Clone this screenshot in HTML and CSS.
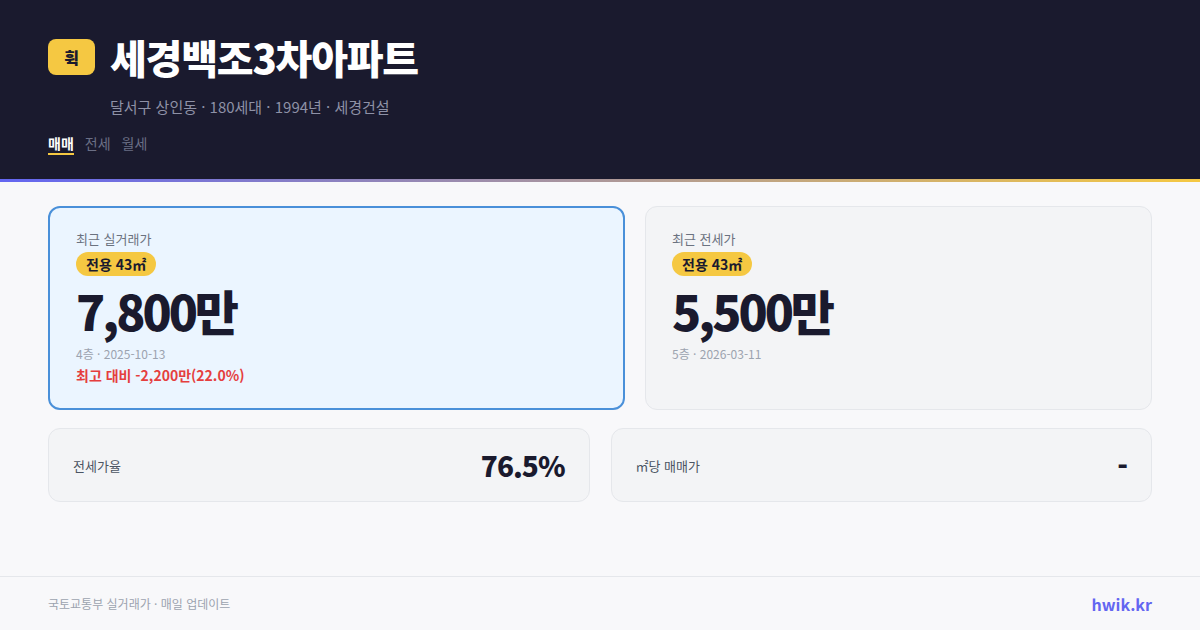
FILE: index.html
```html
<!DOCTYPE html>
<html lang="ko">
<head>
<meta charset="utf-8">
<link rel="stylesheet" href="styles.css">
</head>
<body>
<div class="page">
  <header class="hero">
    <div class="title-row">
      <span class="logo">휙</span>
      <h1 class="title">세경백조3차아파트</h1>
    </div>
    <div class="sub">달서구 상인동 · 180세대 · 1994년 · 세경건설</div>
    <nav class="tabs">
      <span class="tab active">매매</span>
      <span class="tab">전세</span>
      <span class="tab">월세</span>
    </nav>
  </header>
  <div class="accent"></div>
  <main class="main">
    <div class="cards">
      <section class="card primary">
        <div class="label">최근 실거래가</div>
        <span class="chip">전용 43㎡</span>
        <div class="price">7,800만</div>
        <div class="meta">4층 · 2025-10-13</div>
        <div class="diff">최고 대비 -2,200만(22.0%)</div>
      </section>
      <section class="card">
        <div class="label">최근 전세가</div>
        <span class="chip">전용 43㎡</span>
        <div class="price">5,500만</div>
        <div class="meta">5층 · 2026-03-11</div>
      </section>
    </div>
    <div class="stats">
      <div class="stat">
        <span class="stat-label">전세가율</span>
        <span class="stat-value">76.5%</span>
      </div>
      <div class="stat">
        <span class="stat-label">㎡당 매매가</span>
        <span class="stat-value">-</span>
      </div>
    </div>
  </main>
  <footer class="footer">
    <span class="src">국토교통부 실거래가 · 매일 업데이트</span>
    <span class="brand">hwik.kr</span>
  </footer>
</div>
</body>
</html>
```

FILE: styles.css
```css
* { box-sizing: border-box; margin: 0; padding: 0; }
html, body { width: 1200px; height: 630px; overflow: hidden; }
body {
  font-family: "Noto Sans CJK KR", "Noto Sans", sans-serif;
  background: #f8f8fa;
  color: #1a1a2e;
}
.page { display: flex; flex-direction: column; height: 630px; }
.hero {
  background: #1a1a2e;
  height: 179px;
  padding: 33px 48px 0;
}
.title-row { display: flex; align-items: center; gap: 15px; }
.logo {
  width: 47px; height: 36px;
  background: #f5c842;
  border-radius: 8px;
  display: flex; align-items: center; justify-content: center;
  font-size: 16px; font-weight: 900; color: #1a1a2e;
}
.title {
  font-size: 40px; font-weight: 900; color: #ffffff;
  line-height: 48px; letter-spacing: -1.2px;
}
.sub {
  margin: 15px 0 0 62px;
  font-size: 15px; line-height: 22px; color: #8e91a6;
}
.tabs { display: flex; gap: 11px; margin-top: 15px; }
.tab {
  font-size: 14px; line-height: 20px; color: #6b6f85;
  border-bottom: 2px solid transparent;
}
.tab.active { color: #ffffff; font-weight: 700; border-bottom-color: #f5c842; }
.accent { height: 3px; background: linear-gradient(90deg, #6366f1, #f5c842); }
.main { flex: 1; padding: 24px 48px 0; display: flex; flex-direction: column; gap: 18px; }
.cards { display: grid; grid-template-columns: 577fr 507fr; gap: 20px; }
.card {
  height: 204px;
  background: #f3f4f6;
  border: 1px solid #e5e7eb;
  border-radius: 12px;
  padding: 23px 26px 0;
  display: flex; flex-direction: column; align-items: flex-start;
}
.card.primary {
  background: #ebf5ff;
  border: 2px solid #4a90d9;
  padding: 22px 26px 0;
}
.label { font-size: 13px; line-height: 18px; color: #6b7280; }
.chip {
  margin-top: 4px;
  height: 24px; padding: 0 10px;
  background: #f5c842; border-radius: 12px;
  font-size: 14px; font-weight: 700; line-height: 24px; color: #1a1a2e;
}
.price {
  margin-top: 10px;
  font-size: 48px; font-weight: 900; line-height: 48px;
  letter-spacing: -3px; color: #1a1a2e;
}
.meta { margin-top: 11px; font-size: 12px; line-height: 17px; color: #9ca3af; }
.diff { margin-top: 3px; font-size: 14px; font-weight: 700; line-height: 20px; color: #e53e3e; }
.stats { display: grid; grid-template-columns: 1fr 1fr; gap: 21px; }
.stat {
  height: 74px;
  background: #f3f4f6;
  border: 1px solid #e5e7eb;
  border-radius: 12px;
  padding: 0 24px;
  display: flex; align-items: center; justify-content: space-between;
}
.stat-label { font-size: 13px; color: #4b5563; }
.stat-value { font-size: 28px; font-weight: 900; color: #1a1a2e; letter-spacing: -1px; }
.footer {
  height: 54px;
  border-top: 1px solid #e5e7eb;
  padding: 0 48px;
  display: flex; align-items: center; justify-content: space-between;
}
.src { font-size: 12px; color: #9ca3af; }
.brand { font-size: 16px; font-weight: 700; color: #6366f1; }
```
